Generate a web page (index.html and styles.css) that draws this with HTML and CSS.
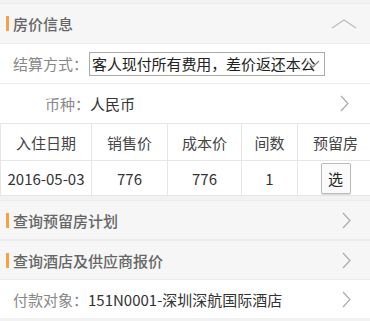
FILE: index.html
```html
<!DOCTYPE html>
<html lang="zh-CN">
<head>
    <meta charset="UTF-8">
    <meta name="viewport" content="width=device-width, initial-scale=1.0">
    <title>房价信息</title>
    <link rel="stylesheet" href="styles.css">
</head>
<body>
    <div class="section-head">
        <span class="mark"></span>
        <span class="title">房价信息</span>
        <svg class="up" width="26" height="10" viewBox="0 0 26 10"><polyline points="1,9 13,1 25,9" fill="none" stroke="#bbb" stroke-width="1.2"/></svg>
    </div>
    <div class="row">
        <span class="label">结算方式：</span>
        <div class="select">
            <span class="select-text">客人现付所有费用，差价返还本公</span>
            <svg class="select-arrow" width="14" height="8" viewBox="0 0 14 8"><polyline points="1,1 7,7 13,1" fill="none" stroke="#888" stroke-width="1.2"/></svg>
        </div>
    </div>
    <div class="row">
        <span class="label currency">币种：</span>
        <span class="value">人民币</span>
        <svg class="chev" width="9" height="17" viewBox="0 0 9 17"><polyline points="1,1 8,8.5 1,16" fill="none" stroke="#aaa" stroke-width="1.2"/></svg>
    </div>
    <table class="price">
        <tr>
            <th class="c1">入住日期</th>
            <th class="c2">销售价</th>
            <th class="c3">成本价</th>
            <th class="c4">间数</th>
            <th class="c5">预留房</th>
        </tr>
        <tr>
            <td>2016-05-03</td>
            <td>776</td>
            <td>776</td>
            <td>1</td>
            <td><button class="pick">选</button></td>
        </tr>
    </table>
    <div class="section-head link">
        <span class="mark"></span>
        <span class="title">查询预留房计划</span>
        <svg class="chev" width="9" height="17" viewBox="0 0 9 17"><polyline points="1,1 8,8.5 1,16" fill="none" stroke="#aaa" stroke-width="1.2"/></svg>
    </div>
    <div class="section-head link second">
        <span class="mark"></span>
        <span class="title">查询酒店及供应商报价</span>
        <svg class="chev" width="9" height="17" viewBox="0 0 9 17"><polyline points="1,1 8,8.5 1,16" fill="none" stroke="#aaa" stroke-width="1.2"/></svg>
    </div>
    <div class="row pay">
        <span class="label">付款对象：</span>
        <span class="value">151N0001-深圳深航国际酒店</span>
        <svg class="chev" width="9" height="17" viewBox="0 0 9 17"><polyline points="1,1 8,8.5 1,16" fill="none" stroke="#aaa" stroke-width="1.2"/></svg>
    </div>
</body>
</html>
```

FILE: styles.css
```css
body {
    margin: 0;
    padding-top: 3px;
    background: #f2f2f2;
    font-family: "Noto Sans CJK SC", "Noto Sans", sans-serif;
    font-size: 15px;
    color: #333;
    width: 370px;
    height: 321px;
    overflow: hidden;
}
.section-head {
    display: flex;
    align-items: center;
    height: 39px;
    background: #f6f6f6;
    border-top: 1px solid #ececec;
    padding-left: 6px;
    padding-right: 13px;
}
.mark {
    width: 3px;
    height: 15px;
    background: #f5a244;
    margin-right: 4px;
}
.title {
    color: #666;
    font-weight: 500;
    flex: 1;
}
.row {
    display: flex;
    align-items: center;
    height: 39px;
    background: #fff;
    border-top: 1px solid #ececec;
    padding-left: 13px;
    padding-right: 21px;
}
.label {
    color: #888;
    white-space: nowrap;
}
.currency {
    padding-left: 32px;
}
.value {
    flex: 1;
    color: #333;
}
.select {
    position: relative;
    width: 234px;
    height: 22px;
    border: 1px solid #aaa;
    margin-left: 1px;
    background: #fff;
    line-height: 22px;
}
.select-text {
    white-space: nowrap;
    padding-left: 2px;
    color: #222;
    letter-spacing: -0.1px;
}
.select-arrow {
    position: absolute;
    right: 4px;
    top: 7px;
}
.chev {
    flex: none;
}
.price {
    width: 370px;
    border-collapse: collapse;
    background: #fff;
    margin-bottom: 4px;
    table-layout: fixed;
}
.price th, .price td {
    border: 1px solid #e6e6e6;
    text-align: center;
    font-weight: normal;
    color: #333;
    padding: 0;
}
.price th {
    height: 36px;
    color: #444;
}
.price td {
    height: 34px;
}
.c1 { width: 90px; }
.c2 { width: 75px; }
.c3 { width: 73px; }
.c4 { width: 55px; }
.c5 { width: 75px; }
.pick {
    font-family: inherit;
    font-size: 15px;
    width: 30px;
    height: 31px;
    padding: 0;
    background: #fafafa;
    border: 1px solid #bbb;
    border-radius: 2px;
    box-shadow: 0 1px 1px rgba(0,0,0,0.15);
    color: #222;
}
.link {
    height: 38px;
    padding-right: 19px;
}
.second {
    border-top: 2px solid #ececec;
}
.pay {
    height: 38px;
    padding-right: 19px;
}
```
